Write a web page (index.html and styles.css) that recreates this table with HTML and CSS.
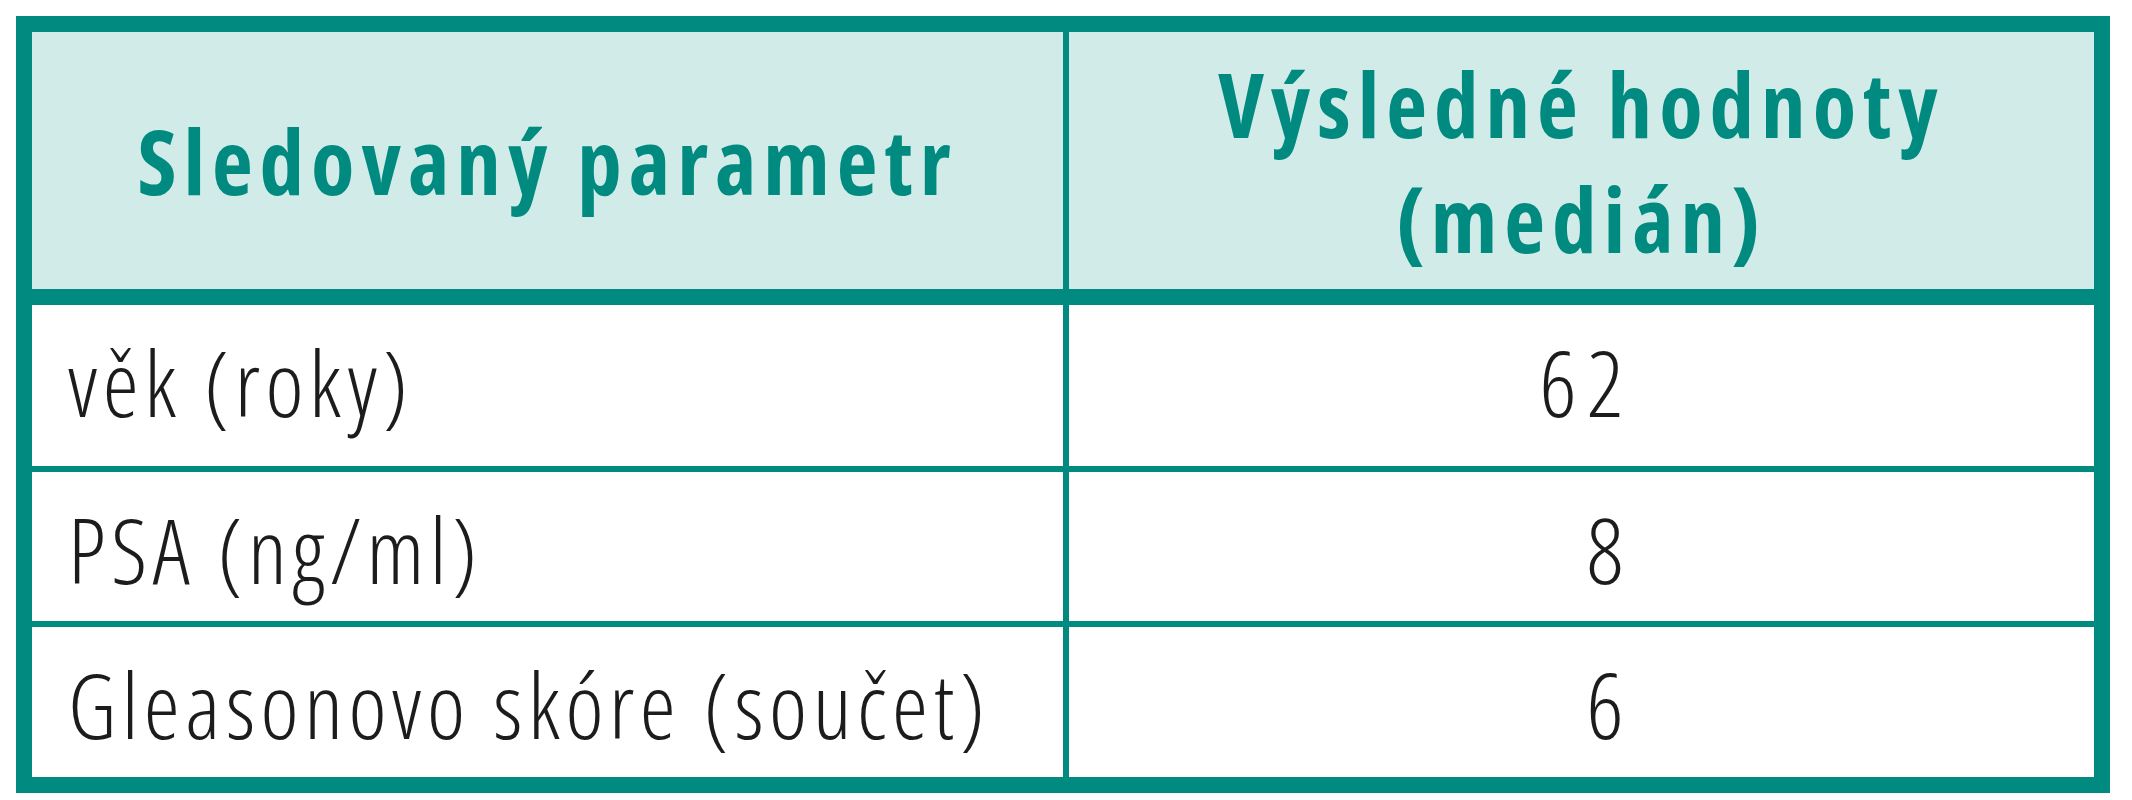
FILE: index.html
```
<!DOCTYPE html>
<html lang="cs">
<head>
<meta charset="utf-8">
<link rel="stylesheet" href="styles.css">
</head>
<body>
<table class="results">
  <thead>
    <tr class="head-row">
      <th class="col-param">Sledovaný parametr</th>
      <th class="col-value">Výsledné hodnoty<br>(medián)</th>
    </tr>
  </thead>
  <tbody>
    <tr class="row row-1">
      <td class="col-param">věk (roky)</td>
      <td class="col-value"><span class="num">62</span></td>
    </tr>
    <tr class="row row-2">
      <td class="col-param">PSA (ng/ml)</td>
      <td class="col-value"><span class="num">8</span></td>
    </tr>
    <tr class="row row-3">
      <td class="col-param">Gleasonovo skóre (součet)</td>
      <td class="col-value"><span class="num">6</span></td>
    </tr>
  </tbody>
</table>
</body>
</html>
```
FILE: styles.css
```
html, body {
  margin: 0;
  padding: 0;
  background: #ffffff;
}

.results {
  margin: 16px;
  width: 2094px;
  border: 16px solid #008a80;
  border-spacing: 0;
  table-layout: fixed;
  font-family: "Open Sans", "Noto Sans", sans-serif;
  font-stretch: 75%;
}

.results th,
.results td {
  padding: 0;
}

.results .col-param {
  width: 1031px;
  border-right: 6px solid #008a80;
}

.head-row th {
  height: 257px;
  vertical-align: middle;
  background: #d0ebe8;
  color: #008a80;
  border-bottom: 16px solid #008a80;
  font-size: 89px;
  font-weight: 700;
  letter-spacing: 7px;
  line-height: 115px;
  text-align: center;
}

.row td {
  vertical-align: top;
  padding-top: 22px;
  font-size: 91px;
  font-weight: 300;
  letter-spacing: 5.5px;
  color: #1c1c1c;
  line-height: 110px;
}

.row td.col-param {
  text-align: left;
  padding-left: 36px;
}

.row td.col-value {
  text-align: center;
}

.row-1 td { height: 139px; border-bottom: 6px solid #008a80; }
.row-2 td { height: 127px; border-bottom: 6px solid #008a80; }
.row-3 td { height: 128px; }

.num {
  display: inline-block;
  width: 104px;
  letter-spacing: 10px;
  text-align: right;
}
```
